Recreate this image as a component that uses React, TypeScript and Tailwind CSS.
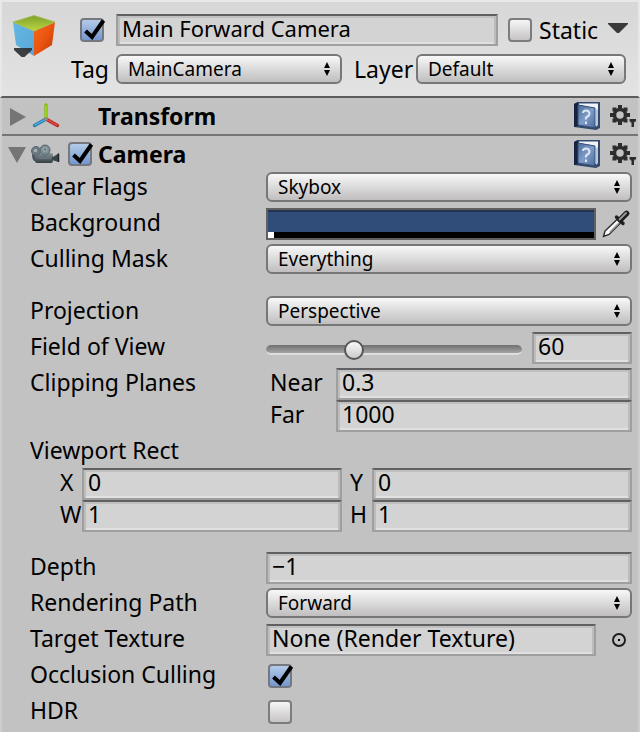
import { useId, useState } from "react";
import type { ReactNode } from "react";

function cx(...parts: (string | undefined)[]) {
  return parts.filter(Boolean).join(" ");
}

function CubeIcon() {
  return (
    <svg viewBox="0 0 44 44" className="h-11 w-11" aria-hidden="true">
      <defs>
        <linearGradient id="cubeTop" x1="0" y1="0" x2="0" y2="1">
          <stop offset="0" stopColor="#7f9f2c" />
          <stop offset="1" stopColor="#b9d841" />
        </linearGradient>
        <linearGradient id="cubeLeft" x1="0" y1="0" x2="1" y2="1">
          <stop offset="0" stopColor="#63b8e2" />
          <stop offset="1" stopColor="#5aa6d6" />
        </linearGradient>
        <linearGradient id="cubeRight" x1="0" y1="0" x2="1" y2="1">
          <stop offset="0" stopColor="#f5691c" />
          <stop offset="0.5" stopColor="#ea5410" />
          <stop offset="1" stopColor="#b93407" />
        </linearGradient>
      </defs>
      <path d="M1 8 22 17V42L4 31Z" fill="url(#cubeLeft)" />
      <path d="M43 8 22 17V42L40 31Z" fill="url(#cubeRight)" />
      <path d="M22 1.5 43 8 22 17 1 8Z" fill="url(#cubeTop)" stroke="#a5bb58" strokeWidth="0.8" />
      <path d="M2 34H20V36L12.500 43H9.500L2 36Z" fill="#2e3133" opacity="0.92" />
    </svg>
  );
}

function AxesIcon() {
  return (
    <svg viewBox="0 0 28 26" className="ml-0.5 h-[26px] w-7" aria-hidden="true" strokeLinecap="round" fill="none">
      <path d="M14 2V16" stroke="#84ba10" strokeWidth="3.4" />
      <path d="M14 16 2.5 22.5" stroke="#2b7fae" strokeWidth="3.4" />
      <path d="M14 16 25.5 22.5" stroke="#b52a26" strokeWidth="3.4" />
      <path d="M14 3V15" stroke="#a6dc20" strokeWidth="1.4" />
      <path d="M13 16.5 3 22" stroke="#4fb3e4" strokeWidth="1.4" />
      <path d="M15 16.5 25 22" stroke="#ee5047" strokeWidth="1.4" />
      <circle cx="14" cy="16" r="1.8" fill="#8a8f86" />
    </svg>
  );
}

function MovieCameraIcon() {
  return (
    <svg viewBox="0 0 30 22" className="h-[22px] w-[30px]" aria-hidden="true">
      <defs>
        <linearGradient id="camBody" x1="0" y1="0" x2="0" y2="1">
          <stop offset="0" stopColor="#87959b" />
          <stop offset="1" stopColor="#343d42" />
        </linearGradient>
      </defs>
      <path d="M2 11h5v7H4q-2-2-2-7Z" fill="#48545a" />
      <rect x="5" y="10" width="18" height="10" rx="2" fill="url(#camBody)" />
      <path d="M22 14.5 28.5 10.5V19L22 17Z" fill="#39444a" />
      <path d="M28.5 10.500V19" stroke="#1f272b" strokeWidth="1.5" />
      <circle cx="6" cy="8" r="4.5" fill="#6c7a81" stroke="#5b676d" />
      <circle cx="15" cy="7" r="5" fill="#7d8b92" stroke="#5b676d" />
      <circle cx="5.5" cy="7.5" r="1.8" fill="#a4b0b5" />
      <circle cx="15" cy="6.5" r="2.5" fill="#98a5ab" />
      <circle cx="15" cy="6.5" r="1" fill="#5b676d" />
      <path d="M9 13h11v3H9Z" fill="#66757c" />
    </svg>
  );
}

function BookIcon() {
  return (
    <svg viewBox="0 0 26 28" className="h-7 w-[26px]" aria-hidden="true">
      <defs>
        <linearGradient id="bookCover" x1="0" y1="0" x2="1" y2="1">
          <stop offset="0" stopColor="#4c6b98" />
          <stop offset="0.5" stopColor="#7f9dc8" />
          <stop offset="1" stopColor="#4d6b98" />
        </linearGradient>
      </defs>
      <path d="M0 2 4 0H26V26L22 28 0 25Z" fill="#33496c" />
      <path d="M0 2 4 0V24L0 25Z" fill="#15233c" />
      <path d="M5 1.5H24V23L21 24V6L5 3Z" fill="#f0f4f9" />
      <path d="M22 8 24 7V23L22 25Z" fill="#b9c7dc" />
      <path d="M4 3 21 6V26L4 23Z" fill="url(#bookCover)" stroke="#35507c" />
      <path d="M9 11q0-2.500 3-2.500t3.500 3q0 2-2 3T12 17.500M12 19.500v2.500" fill="none" stroke="#dbe5f3" strokeWidth="2" />
    </svg>
  );
}

function GearIcon() {
  return (
    <svg viewBox="0 0 26 22" className="h-[22px] w-[26px]" aria-hidden="true">
      <g fill="#2c2c2c">
        <rect x="8" y="0" width="4" height="4" />
        <rect x="8" y="16" width="4" height="4" />
        <rect x="0" y="8" width="4" height="4" />
        <rect x="16" y="8" width="4" height="4" />
        <rect x="2.5" y="2.5" width="4" height="4" />
        <rect x="13.5" y="2.5" width="4" height="4" />
        <rect x="2.5" y="13.5" width="4" height="4" />
        <rect x="13.5" y="13.5" width="4" height="4" />
        <path d="M19.5 14H26v2.5h-1.5v1H24V22h-2.5v-4.5h-1v-1h-1Z" />
      </g>
      <circle cx="10" cy="10" r="5.5" fill="none" stroke="#2c2c2c" strokeWidth="3.5" />
    </svg>
  );
}

function EyedropperIcon() {
  return (
    <svg viewBox="0 0 28 28" className="h-7 w-7" aria-hidden="true">
      <path d="M1.500 26.500 3 21 15 9.500 18.500 13 7 24.500Z" fill="#fafafa" stroke="#2a2a2a" strokeWidth="1.4" />
      <path d="M8 22 17 13" stroke="#9a9a9a" strokeWidth="1.6" />
      <path d="M14.500 7 21 13.500" stroke="#222" strokeWidth="3.4" strokeLinecap="round" />
      <path d="M18.500 9.500 24.500 3.500" stroke="#1d1d1d" strokeWidth="5.6" strokeLinecap="round" />
      <path d="M17.500 9.500 24 3" stroke="#9b9b9b" strokeWidth="1.8" strokeLinecap="round" />
    </svg>
  );
}

function PickerIcon() {
  return (
    <svg viewBox="0 0 14 14" className="h-3.5 w-3.5" aria-hidden="true">
      <circle cx="7" cy="7" r="6" fill="none" stroke="#1a1a1a" strokeWidth="1.9" />
      <rect x="6" y="6" width="2" height="2" fill="#000" />
    </svg>
  );
}

function Checkbox({ id, label, checked }: { id?: string; label?: string; checked?: boolean }) {
  return (
    <span className="relative block h-6 w-6 shrink-0">
      <input
        id={id}
        type="checkbox"
        aria-label={label}
        defaultChecked={checked}
        className="peer block h-6 w-6 appearance-none rounded-[4px] border-2 border-[#7c7c7c] bg-linear-to-b from-[#f6f6f6] to-[#c6c4c4] checked:border-[#75787e] checked:from-[#b4cbe8] checked:to-[#7597cf]"
      />
      <svg
        viewBox="0 0 28 24"
        className="pointer-events-none absolute top-0 left-0 hidden h-6 w-7 peer-checked:block"
        aria-hidden="true"
      >
        <path d="M5.5 13 12 19 23.5 2.5" fill="none" stroke="#000" strokeWidth="4" />
      </svg>
    </span>
  );
}

function Popup({ id, value, className }: { id: string; value: string; className?: string }) {
  return (
    <span className={cx("relative block h-[30px] min-w-0", className)}>
      <select
        id={id}
        className="block h-full w-full appearance-none rounded-[6px] border-2 border-[#777] bg-linear-to-b from-[#f8f8f8] to-[#c0bebe] pr-6 pl-2.5 text-[19px] leading-[26px]"
      >
        <option>{value}</option>
      </select>
      <svg
        viewBox="0 0 6 14"
        className="pointer-events-none absolute top-2 right-3 h-3.5 w-1.5"
        aria-hidden="true"
      >
        <path d="M3 0 6 6H0ZM0 8H6L3 14Z" fill="#000" />
      </svg>
    </span>
  );
}

const fieldStyle =
  "block h-8 min-w-0 border-2 border-[#9f9f9f] border-t-[#606060] bg-[#d3d3d3] px-1 pb-[3px] shadow-[inset_2px_0_#bcbcbc,inset_-2px_0_#bcbcbc,inset_0_2px_#c0c0c0,inset_0_-2px_#e0e0e0]";

function Field({ id, value, label, className }: { id?: string; value: string; label?: string; className?: string }) {
  return <input id={id} type="text" aria-label={label} defaultValue={value} className={cx(fieldStyle, className)} />;
}

function Row({ label, htmlFor, children }: { label: string; htmlFor?: string; children?: ReactNode }) {
  return (
    <div className="flex h-8">
      <label htmlFor={htmlFor} className="w-[236px] shrink-0 leading-7 whitespace-nowrap">
        {label}
      </label>
      <div className="flex min-w-0 flex-1">{children}</div>
    </div>
  );
}

function LabelledField({ label, value, labelClass }: { label: string; value: string; labelClass: string }) {
  const id = useId();
  return (
    <div className="flex min-w-0 flex-1">
      <label htmlFor={id} className={cx("shrink-0 leading-7", labelClass)}>
        {label}
      </label>
      <Field id={id} value={value} className="w-0 flex-1" />
    </div>
  );
}

function ComponentHeader({ title, open, children }: { title: string; open?: boolean; children: ReactNode }) {
  return (
    <div className="flex h-9 items-center pl-1.5">
      <button type="button" aria-label={"Toggle " + title} aria-expanded={!!open} className="flex w-[22px] justify-start">
        <svg viewBox="0 0 18 20" className="h-5 w-[18px]" aria-hidden="true">
          <path d={open ? "M0 3H18L9 19Z" : "M2 2 18 11 2 20Z"} fill="#757575" />
        </svg>
      </button>
      <div className="flex w-[68px] shrink-0 items-center justify-between pr-1.5">{children}</div>
      <h2 className="flex-1 font-bold">{title}</h2>
      <button type="button" aria-label={title + " help"} className="mr-2.5">
        <BookIcon />
      </button>
      <button type="button" aria-label={title + " settings"} className="mr-0.5">
        <GearIcon />
      </button>
    </div>
  );
}

export default function App() {
  const [fov, setFov] = useState(60);

  return (
    <main className="min-h-screen border-x-2 border-[#cecece] bg-[#c2c2c2] font-['Noto_Sans','Open_Sans',sans-serif] text-[23px] text-black">
      <header className="-mx-0.5 flex h-[98px] border-2 border-[#e8e8e8] border-b-[#5c5c5c] bg-linear-to-b from-[#d7d7d7] to-[#e3e3e3] pt-3 pr-3 pl-2.5">
        <button type="button" aria-label="Object icon" className="mr-1 h-11 shrink-0">
          <CubeIcon />
        </button>
        <div className="flex min-w-0 flex-1 flex-col gap-2">
          <div className="flex items-center">
            <div className="flex w-14 shrink-0 justify-end pr-3">
              <Checkbox label="Active" checked />
            </div>
            <Field label="Name" value="Main Forward Camera" className="w-0 flex-1 text-[22px]" />
            <div className="ml-2.5 flex items-center">
              <Checkbox id="static" />
              <label htmlFor="static" className="w-[76px] pl-[7px] leading-7">
                Static
              </label>
            </div>
            <button type="button" aria-label="Static options" className="-mr-0.5 pb-1">
              <svg viewBox="0 0 20 12" className="h-3 w-5" aria-hidden="true">
                <path d="M0 1H20V2L11 11H9L0 2Z" fill="#3a3a3a" />
              </svg>
            </button>
          </div>
          <div className="flex h-[30px] items-center">
            <label htmlFor="tag" className="w-14 shrink-0 pr-[7px] text-right leading-7">
              Tag
            </label>
            <Popup id="tag" value="MainCamera" className="flex-[226]" />
            <label htmlFor="layer" className="w-[74px] shrink-0 pl-3 leading-7">
              Layer
            </label>
            <Popup id="layer" value="Default" className="flex-[210]" />
          </div>
        </div>
      </header>

      <section className="border-b-2 border-[#757575]">
        <ComponentHeader title="Transform">
          <AxesIcon />
        </ComponentHeader>
      </section>

      <section>
        <ComponentHeader title="Camera" open>
          <MovieCameraIcon />
          <Checkbox label="Camera enabled" checked />
        </ComponentHeader>

        <div className="flex flex-col gap-1 pr-1.5 pb-2 pl-7">
          <Row label="Clear Flags" htmlFor="clear">
            <Popup id="clear" value="Skybox" className="flex-1" />
          </Row>
          <Row label="Background" htmlFor="background">
            <button
              id="background"
              type="button"
              className="flex flex-1 flex-col border-2 border-[#606060] bg-[#304d79] shadow-[inset_0_2px_#22344f]"
            >
              <span className="flex-1" />
              <span className="block h-1.5 w-full bg-black">
                <span className="block h-full w-1.5 bg-white" />
              </span>
            </button>
            <button type="button" aria-label="Pick color" className="flex w-9 items-center justify-end pr-0.5">
              <EyedropperIcon />
            </button>
          </Row>
          <Row label="Culling Mask" htmlFor="culling">
            <Popup id="culling" value="Everything" className="flex-1" />
          </Row>

          <div className="mt-4 flex flex-col gap-1">
            <Row label="Projection" htmlFor="projection">
              <Popup id="projection" value="Perspective" className="flex-1" />
            </Row>
            <Row label="Field of View" htmlFor="fov">
              <input
                id="fov"
                type="range"
                min={1}
                max={179}
                value={fov}
                onChange={(e) => setFov(Number(e.target.value))}
                className="mt-2 mr-2.5 h-5 w-0 flex-1 appearance-none bg-transparent [&::-webkit-slider-runnable-track]:h-2.5 [&::-webkit-slider-runnable-track]:rounded-full [&::-webkit-slider-runnable-track]:border-b-2 [&::-webkit-slider-runnable-track]:border-[#dedede] [&::-webkit-slider-runnable-track]:bg-linear-to-b [&::-webkit-slider-runnable-track]:from-[#707070] [&::-webkit-slider-runnable-track]:to-[#a4a4a4] [&::-webkit-slider-thumb]:-mt-[5px] [&::-webkit-slider-thumb]:h-5 [&::-webkit-slider-thumb]:w-5 [&::-webkit-slider-thumb]:appearance-none [&::-webkit-slider-thumb]:rounded-full [&::-webkit-slider-thumb]:border-2 [&::-webkit-slider-thumb]:border-[#565656] [&::-webkit-slider-thumb]:bg-linear-to-b [&::-webkit-slider-thumb]:from-[#f8f8f8] [&::-webkit-slider-thumb]:to-[#cccccc]"
              />
              <input
                type="text"
                aria-label="Field of View value"
                value={fov}
                onChange={(e) => setFov(Number(e.target.value) || 1)}
                className={cx(fieldStyle, "w-[100px]")}
              />
            </Row>
            <div className="flex">
              <span className="w-[236px] shrink-0 leading-7">Clipping Planes</span>
              <div className="flex min-w-0 flex-1 flex-col">
                <LabelledField label="Near" value="0.3" labelClass="w-[70px] pl-1" />
                <LabelledField label="Far" value="1000" labelClass="w-[70px] pl-1" />
              </div>
            </div>
            <div>
              <span className="block h-8 leading-7">Viewport Rect</span>
              <div className="grid grid-cols-2 gap-x-2 pl-[30px]">
                <LabelledField label="X" value="0" labelClass="w-[22px]" />
                <LabelledField label="Y" value="0" labelClass="w-[22px]" />
                <LabelledField label="W" value="1" labelClass="w-[22px]" />
                <LabelledField label="H" value="1" labelClass="w-[22px]" />
              </div>
            </div>
          </div>

          <div className="mt-4 flex flex-col gap-1">
            <Row label="Depth" htmlFor="depth">
              <Field id="depth" value="−1" className="w-0 flex-1" />
            </Row>
            <Row label="Rendering Path" htmlFor="path">
              <Popup id="path" value="Forward" className="flex-1" />
            </Row>
            <Row label="Target Texture" htmlFor="texture">
              <Field id="texture" value="None (Render Texture)" className="w-0 flex-1" />
              <button
                type="button"
                aria-label="Select texture"
                className="flex w-9 items-center justify-end pr-1.5"
              >
                <PickerIcon />
              </button>
            </Row>
            <Row label="Occlusion Culling" htmlFor="occlusion">
              <div className="pt-1 pl-0.5">
                <Checkbox id="occlusion" checked />
              </div>
            </Row>
            <Row label="HDR" htmlFor="hdr">
              <div className="pt-1 pl-0.5">
                <Checkbox id="hdr" />
              </div>
            </Row>
          </div>
        </div>
      </section>
    </main>
  );
}
